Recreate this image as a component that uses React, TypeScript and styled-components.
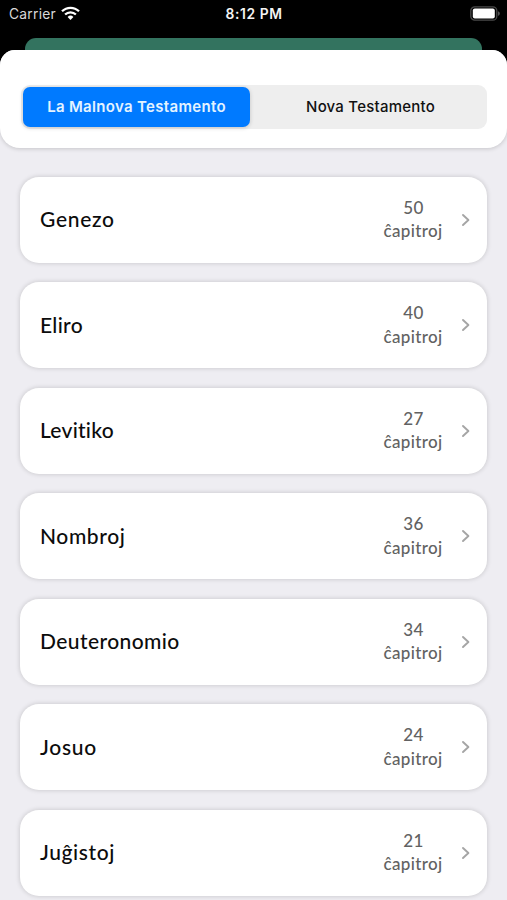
import React from 'react';
import styled, { createGlobalStyle } from 'styled-components';

const GlobalStyle = createGlobalStyle`
  * { box-sizing: border-box; }
  html, body { margin: 0; background: #000; }
  body { overflow: hidden; }
`;

const Screen = styled.div`
  width: 507px;
  height: 900px;
  overflow: hidden;
  display: flex;
  flex-direction: column;
  background: #000;
  font-family: Inter, 'Liberation Sans', sans-serif;
`;

const StatusBar = styled.header`
  flex: none;
  height: 38px;
  padding: 3px 7px 14px 9px;
  display: grid;
  grid-template-columns: 1fr auto 1fr;
  align-items: center;
  color: #f4f4f4;
`;

const Carrier = styled.div`
  display: flex;
  align-items: center;
  gap: 5px;
  font-size: 13.8px;
  letter-spacing: 0.25px;
  line-height: 20px;
  color: #d8d8d8;
`;

const Clock = styled.div`
  padding-right: 1px;
  font-size: 13.8px;
  font-weight: 600;
  letter-spacing: 0.6px;
  line-height: 20px;
`;

const BatterySlot = styled.div`
  display: flex;
  justify-content: flex-end;
`;

const BackSheet = styled.div`
  flex: none;
  height: 12px;
  margin: 0 25px;
  border-radius: 11px 11px 0 0;
  background: #33735f;
`;

const Sheet = styled.main`
  flex: 1;
  min-height: 0;
  overflow: hidden;
  border-radius: 15px 15px 0 0;
  background: #eeedf2;
`;

const TabPanel = styled.div`
  height: 97.5px;
  padding: 34.5px 20px 0 21px;
  border-radius: 0 0 20px 20px;
  background: #fff;
  box-shadow: 0 1px 4px rgba(0, 0, 0, 0.17);
`;

const Segments = styled.div`
  height: 44px;
  padding: 2px 0 2px 2px;
  display: grid;
  grid-template-columns: 227px 1fr;
  gap: 4px;
  border-radius: 9px;
  background: #eeeeee;
`;

const Segment = styled.button<{ $active?: boolean }>`
  height: 40px;
  padding: 0 0 1px;
  border: 0;
  border-radius: 7px;
  font-family: inherit;
  font-size: 15px;
  font-weight: ${(p) => (p.$active ? 600 : 500)};
  letter-spacing: ${(p) => (p.$active ? '0.32px' : '0.22px')};
  color: ${(p) => (p.$active ? '#e4f3ff' : '#111')};
  background: ${(p) => (p.$active ? '#007aff' : 'transparent')};
  box-shadow: ${(p) => (p.$active ? '0 1px 4px rgba(0, 0, 0, 0.18)' : 'none')};
`;

const BookList = styled.ul`
  margin: 0;
  padding: 29px 20px 0;
  display: flex;
  flex-direction: column;
  gap: 19.5px;
  list-style: none;
`;

const BookCard = styled.li`
  height: 86px;
  padding: 0 16.5px 0 20px;
  display: flex;
  align-items: center;
  border-radius: 19px;
  background: #fff;
  box-shadow: 0 0 5px rgba(0, 0, 0, 0.18);
  font-family: Lato, 'Noto Sans', sans-serif;
`;

const BookName = styled.span<{ $tracking: number }>`
  flex: 1;
  padding-bottom: 1px;
  font-size: 21px;
  font-weight: 500;
  letter-spacing: ${(p) => p.$tracking}px;
  line-height: 28px;
  color: #0c0c0c;
`;

const Chapters = styled.div`
  width: 60px;
  margin-right: 17.5px;
  padding-bottom: 1px;
  text-align: center;
  font-size: 17px;
  font-weight: 500;
  line-height: 23.5px;
  white-space: nowrap;
  color: #626262;
`;

const Count = styled.div`
  padding-left: 1px;
  letter-spacing: 0.4px;
`;

const Unit = styled.div`
  letter-spacing: 0.36px;
`;

const books = [
  { name: 'Genezo', chapters: 50, tracking: 0.7 },
  { name: 'Eliro', chapters: 40, tracking: 0.3 },
  { name: 'Levitiko', chapters: 27, tracking: 0.25 },
  { name: 'Nombroj', chapters: 36, tracking: 0.6 },
  { name: 'Deuteronomio', chapters: 34, tracking: 0.42 },
  { name: 'Josuo', chapters: 24, tracking: 0.7 },
  { name: 'Juĝistoj', chapters: 21, tracking: 0.6 },
];

const WifiIcon = () => (
  <svg width="19" height="15" viewBox="0 0 19 15" fill="none" stroke="#fff" strokeWidth="2.3">
    <path d="M1 5.3C5.8.6 13.2.6 18 5.3" />
    <path d="M4.1 8.5c3-2.9 7.8-2.9 10.8 0" />
    <path d="M6.6 10.9a4.3 4.3 0 0 1 5.8 0L9.5 14z" fill="#fff" stroke="none" />
  </svg>
);

const BatteryIcon = () => (
  <svg width="30" height="15" viewBox="0 0 30 15">
    <rect x="0.8" y="0.8" width="26" height="13.4" rx="4" fill="none" stroke="#4a4a4a" strokeWidth="1.3" />
    <rect x="2.8" y="2.6" width="22" height="9.8" rx="2" fill="#fff" />
    <path d="M28.2 5.2c2 .8 2 3.8 0 4.6z" fill="#666" />
  </svg>
);

const Chevron = () => (
  <svg width="10" height="14" viewBox="0 0 10 14" fill="none" stroke="#a5a5a5" strokeWidth="1.9">
    <path d="M2 2l5.4 5L2 12" strokeLinecap="round" strokeLinejoin="round" />
  </svg>
);

export default function App() {
  return (
    <Screen>
      <GlobalStyle />
      <StatusBar>
        <Carrier>
          Carrier
          <WifiIcon />
        </Carrier>
        <Clock>8:12 PM</Clock>
        <BatterySlot>
          <BatteryIcon />
        </BatterySlot>
      </StatusBar>
      <BackSheet />
      <Sheet>
        <TabPanel>
          <Segments>
            <Segment $active>La Malnova Testamento</Segment>
            <Segment>Nova Testamento</Segment>
          </Segments>
        </TabPanel>
        <BookList>
          {books.map((book) => (
            <BookCard key={book.name}>
              <BookName $tracking={book.tracking}>{book.name}</BookName>
              <Chapters>
                <Count>{book.chapters}</Count>
                <Unit>ĉapitroj</Unit>
              </Chapters>
              <Chevron />
            </BookCard>
          ))}
        </BookList>
      </Sheet>
    </Screen>
  );
}
